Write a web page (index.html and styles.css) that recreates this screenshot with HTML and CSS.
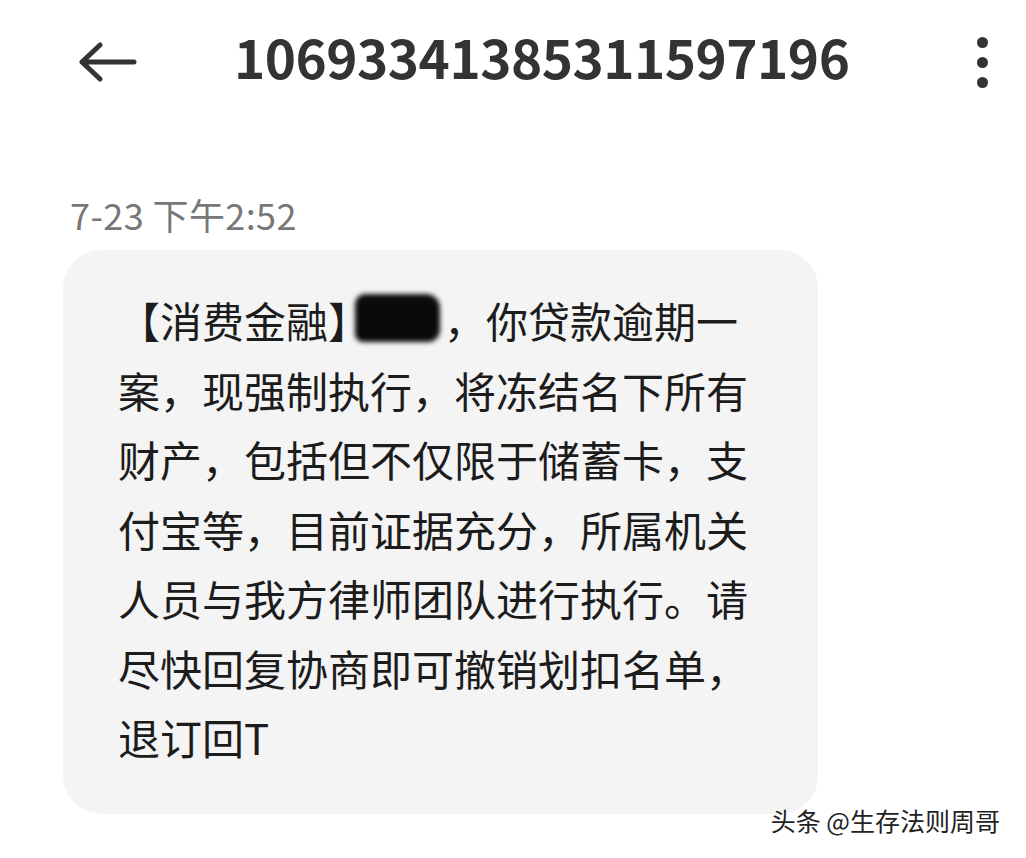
FILE: index.html
```html
<!DOCTYPE html>
<html lang="zh-CN">
<head>
  <meta charset="UTF-8" />
  <meta name="viewport" content="width=device-width, initial-scale=1.0" />
  <title>短信</title>
  <link rel="stylesheet" href="styles.css">
</head>
<body>

<div class="screen">
  <div class="topbar">
    <button class="back" aria-label="返回">
      <svg width="60" height="40" viewBox="0 0 60 40">
        <path d="M4 20 H56 M22 3 L4 20 L22 37" fill="none" stroke="#333" stroke-width="5" stroke-linecap="round" stroke-linejoin="round"/>
      </svg>
    </button>
    <div class="number">10693341385311597196</div>
    <button class="more" aria-label="更多">
      <span></span><span></span><span></span>
    </button>
  </div>

  <div class="time">7-23 下午2:52</div>

  <div class="bubble">
    <p>【消费金融】<span class="hidden-name"></span>，你贷款逾期一案，现强制执行，将冻结名下所有财产，包括但不仅限于储蓄卡，支付宝等，目前证据充分，所属机关人员与我方律师团队进行执行。请尽快回复协商即可撤销划扣名单，退订回T</p>
  </div>

  <div class="watermark">头条 @生存法则周哥</div>
</div>

</body>
</html>
```

FILE: styles.css
```css
body {
  margin: 0;
  background: #fff;
  font-family: "Noto Sans CJK SC", "Noto Sans", sans-serif;
  color: #1c1c1c;
}
.screen {
  position: relative;
  width: 1026px;
  height: 858px;
  overflow: hidden;
}
.topbar {
  display: flex;
  align-items: center;
  height: 124px;
  padding: 0 0 0 78px;
}
.topbar button {
  background: none;
  border: none;
  padding: 0;
  cursor: pointer;
}
.back {
  width: 62px;
  height: 40px;
  display: flex;
  align-items: center;
}
.number {
  margin-left: 94px;
  margin-bottom: 12px;
  font-size: 53px;
  line-height: 1;
  font-weight: bold;
  color: #333;
  letter-spacing: -0.5px;
}
.more {
  margin-left: auto;
  margin-right: 38px;
  display: flex;
  flex-direction: column;
  gap: 9px;
}
.more span {
  width: 11px;
  height: 11px;
  border-radius: 50%;
  background: #333;
}
.time {
  margin: 68px 0 0 70px;
  font-size: 36px;
  line-height: 44px;
  letter-spacing: 0.4px;
  color: #777;
}
.bubble {
  width: 630px;
  margin: 14px 0 0 63px;
  padding: 35px 70px 42px 55px;
  background: #f4f4f4;
  border-radius: 38px;
}
.bubble p {
  margin: 0;
  font-size: 42px;
  line-height: 69.5px;
}
.hidden-name {
  position: relative;
  display: inline-block;
  width: 74px;
  height: 1em;
  vertical-align: -4px;
}
.hidden-name::before {
  content: "";
  position: absolute;
  left: -15px;
  top: -6px;
  width: 85px;
  height: 48px;
  background: #0a0a0a;
  border-radius: 10px 14px 12px 8px;
  filter: blur(2.5px);
}
.watermark {
  position: absolute;
  right: 26px;
  bottom: 20px;
  font-size: 25px;
  color: #222;
  text-shadow: 0 0 2px #fff, 1px 1px 1px #fff;
}
```
